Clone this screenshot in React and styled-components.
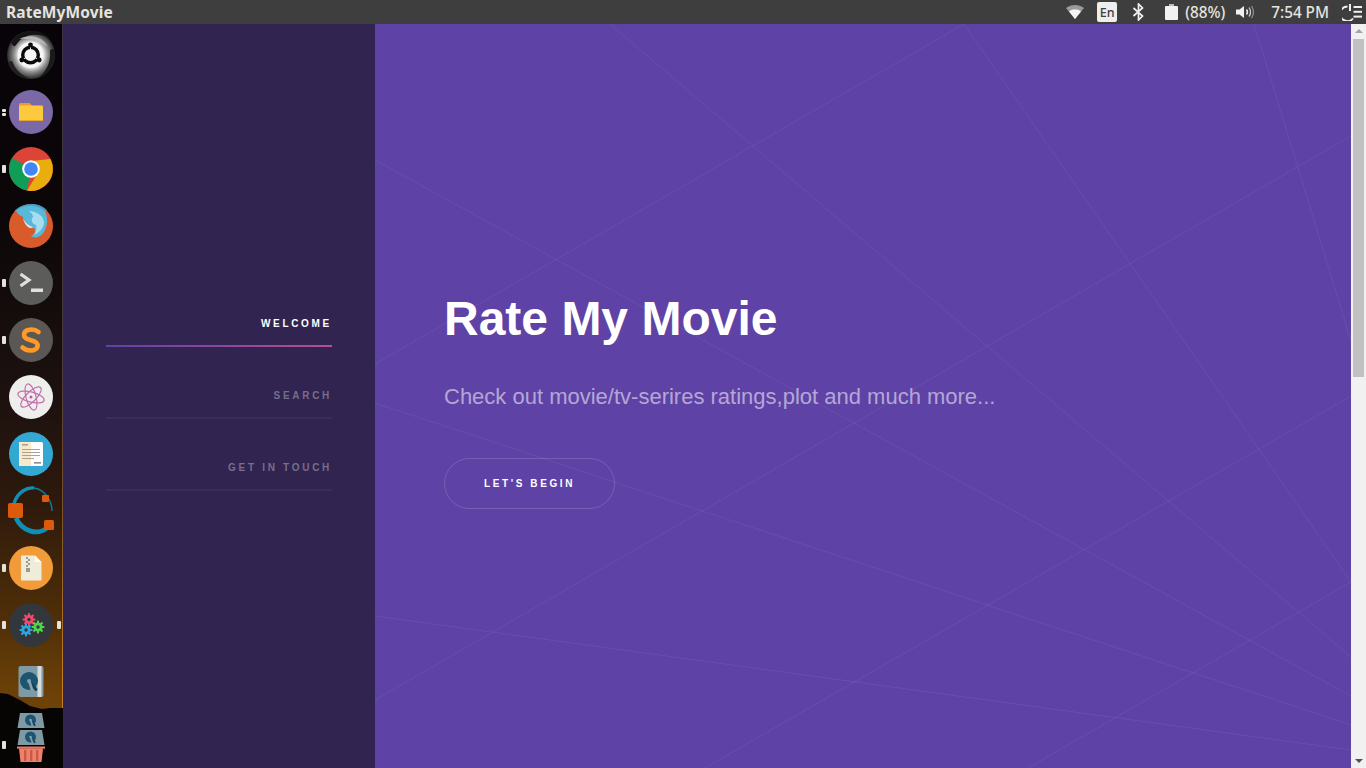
import React from "react";
import styled, { createGlobalStyle } from "styled-components";

const Global = createGlobalStyle`
  html, body { margin: 0; padding: 0; height: 100%; overflow: hidden; }
  body { font-family: "Liberation Sans", Arial, sans-serif; background: #312450; }
  #root { height: 100%; }
`;

const Screen = styled.div`
  display: flex;
  flex-direction: column;
  width: 1366px;
  height: 768px;
  overflow: hidden;
`;
const TopBar = styled.header`
  display: flex;
  align-items: center;
  flex: 0 0 24px;
  height: 24px;
  background: #3e3e3e;
  color: #e6e4de;
  font-family: "Noto Sans", sans-serif;
`;
const AppTitle = styled.div`
  margin-left: 6px;
  font-size: 15.5px;
  font-weight: 700;
  flex: 1;
  letter-spacing: 0.1px;
`;
const Tray = styled.div`
  display: flex;
  align-items: center;
  height: 24px;
`;
const TrayText = styled.span`
  font-size: 15.3px;
  font-weight: 500;
  margin-left: ${(p) => p.$ml}px;
  white-space: nowrap;
`;
const TrayIcon = styled.svg`
  display: block;
  margin-left: ${(p) => p.$ml}px;
  margin-right: ${(p) => p.$mr || 0}px;
`;
const LangBox = styled.div`
  margin-left: 13px;
  width: 20px;
  height: 20px;
  border-radius: 2px;
  background: #eeeeec;
  color: #3f3e3b;
  font-size: 12.5px;
  font-weight: 500;
  display: flex;
  align-items: center;
  justify-content: center;
`;
const Body = styled.div`
  display: flex;
  flex: 1;
  min-height: 0;
`;
const Dock = styled.nav`
  position: relative;
  flex: 0 0 63px;
  width: 63px;
  height: 744px;
  margin-right: -1px;
  box-sizing: border-box;
  background: linear-gradient(180deg, #070308 0%, #0c0608 25%, #1c110f 50%, #2f1a0c 65%, #4f2f08 80%, #6c4107 90%, #7a4a08 100%);
  overflow: hidden;
  border-right: 1px solid;
  border-image: linear-gradient(180deg, #3c3244 0%, #4a3a3a 45%, #7a5228 65%, #c67c1e 88%, #c67c1e 91.8%, #0a0606 91.8%, #0a0606 100%) 1;
  z-index: 1;
`;
const DockHill = styled.svg`
  position: absolute;
  left: 0;
  bottom: 0;
`;
const DockList = styled.div`
  position: relative;
  display: flex;
  flex-direction: column;
  padding-top: 2px;
`;
const DockItem = styled.div`
  position: relative;
  height: 57px;
  display: flex;
  align-items: center;
  justify-content: center;
  width: 62px;
  svg { display: block; overflow: visible; margin-left: -1px; }
`;
const Pip = styled.i`
  position: absolute;
  top: ${(p) => p.$top || 25}px;
  left: ${(p) => p.$left || 2}px;
  width: 4px;
  height: ${(p) => p.$h || 8}px;
  background: #e4e2de;
  border-radius: 1px;
`;
const Sidebar = styled.aside`
  flex: 0 0 313px;
  box-sizing: border-box;
  height: 744px;
  background: #312450;
  padding: 275px 43px 0 44px;
`;
const NavItem = styled.a`
  display: block;
  height: 46px;
  margin-bottom: 24px;
  text-align: right;
  border-bottom: 2px solid ${(p) => (p.$active ? "transparent" : "#3b2e5e")};
  border-image: ${(p) => (p.$active ? "linear-gradient(to right, #5e42a6, #b74e91) 1" : "none")};
  color: ${(p) => (p.$active ? "#ffffff" : "rgba(255,255,255,0.35)")};
  font-size: 10px;
  line-height: 50px;
  font-weight: 700;
  letter-spacing: 2.7px;
  text-transform: uppercase;
`;
const Main = styled.main`
  position: relative;
  flex: 1;
  height: 744px;
  background: #5e42a6;
  box-sizing: border-box;
  padding: 262px 0 0 69px;
  color: #fff;
  overflow: hidden;
`;
const Lines = styled.svg`
  position: absolute;
  left: 0;
  top: 0;
`;
const Content = styled.div`
  position: relative;
`;
const Title = styled.h1`
  margin: 0;
  font-size: 48px;
  line-height: 66px;
  font-weight: 700;
`;
const Lead = styled.p`
  margin: 27px 0 0;
  font-size: 22px;
  line-height: 36px;
  color: rgba(255,255,255,0.55);
`;
const Button = styled.a`
  display: flex;
  align-items: center;
  justify-content: center;
  margin-top: 43px;
  width: 171px;
  height: 51px;
  box-sizing: border-box;
  border: 1px solid rgba(255,255,255,0.15);
  border-radius: 26px;
  color: #fff;
  font-size: 10px;
  font-weight: 700;
  letter-spacing: 2.6px;
  text-transform: uppercase;
`;
const Scrollbar = styled.div`
  flex: 0 0 15px;
  height: 744px;
  background: #f1f1f1;
  display: flex;
  flex-direction: column;
  align-items: center;
`;
const Arrow = styled.div`
  width: 0;
  height: 0;
  margin: ${(p) => (p.$down ? "auto 0 5px" : "5px 0 5px")};
  border-left: 4px solid transparent;
  border-right: 4px solid transparent;
  ${(p) => (p.$down ? "border-top: 4px solid #505050;" : "border-bottom: 4px solid #a3a3a3;")}
`;
const Thumb = styled.div`
  width: 11px;
  height: 338px;
  background: #c1c1c1;
  margin-top: 1px;
`;

const segs = [
  [610, 24, 1351, 657],
  [375, 364, 964, 24],
  [375, 160, 1351, 696],
  [964, 24, 1351, 582],
  [375, 700, 1351, 136],
  [375, 403, 1351, 725],
  [375, 616, 1351, 750],
  [705, 768, 1351, 396],
  [1028, 768, 1351, 582],
  [1254, 24, 1351, 341],
];

const Ic = ({ children, s = 44 }) => (
  <svg width={s} height={s} viewBox="0 0 44 44">{children}</svg>
);

const UbuntuIcon = () => (
  <Ic>
    <defs>
      <radialGradient id="ub" cx="50%" cy="50%" r="50%">
        <stop offset="0.5" stopColor="#f0f0f0" />
        <stop offset="0.72" stopColor="#8a8a8a" />
        <stop offset="1" stopColor="#2a2a2a" />
      </radialGradient>
    </defs>
    <circle cx="22" cy="22" r="24" fill="url(#ub)" />
    <path d="M2 10 C10 -4 30 -6 42 6 C30 -1 14 0 7 12 C5 15 4 12 2 10Z" fill="#141414" />
    <path d="M-1 30 C1 38 10 46 22 46 C14 43 7 38 4 30 C3 27 1 28 -1 30Z" fill="#202020" />
    <path d="M46 18 C47 30 40 41 30 45 C37 38 42 30 41 18 C42 15 45 16 46 18Z" fill="#1a1a1a" />
    <path d="M10 6 C22 0 34 4 39 14 C32 8 20 5 10 6Z" fill="#b8b8b8" />
    <circle cx="21.5" cy="22" r="13" fill="#f6f6f6" />
    <circle cx="21.5" cy="22" r="7.8" fill="none" stroke="#0a0a0a" strokeWidth="3.4" />
    <g stroke="#f6f6f6" strokeWidth="0.9">
      <path d="M21.5 18 L21.5 11" />
      <path d="M18 24 L12 27.5" />
      <path d="M25 24 L31 27.5" />
    </g>
    <circle cx="21.5" cy="12" r="2.4" fill="#0a0a0a" />
    <circle cx="12.8" cy="27" r="2.4" fill="#0a0a0a" />
    <circle cx="30.2" cy="27" r="2.4" fill="#0a0a0a" />
  </Ic>
);
const FilesIcon = () => (
  <Ic>
    <circle cx="22" cy="22" r="22" fill="#7b68a6" />
    <path d="M10 14.5 a1.5 1.5 0 0 1 1.5 -1.5 h9 l2 2 h1 v3 h-13.5z" fill="#f29a2e" />
    <rect x="10" y="15.5" width="24" height="15.5" rx="1" fill="#fdca3f" />
    <rect x="10" y="30" width="24" height="1" fill="#e2a72d" />
  </Ic>
);
const ChromeIcon = () => (
  <Ic>
    <circle cx="22" cy="22" r="22" fill="#db4437" />
    <path d="M22 22 L3 11 A22 22 0 0 0 18 43.6Z" fill="#109d58" />
    <path d="M22 14 L41.5 12 A22 22 0 0 1 18 43.6 L29 26Z" fill="#e9ae0e" />
    <path d="M3 11 L14 28 L22 22Z" fill="#109d58" />
    <circle cx="22" cy="22" r="8.8" fill="#fff" />
    <circle cx="22" cy="22" r="6.8" fill="#4285f4" />
  </Ic>
);
const FirefoxIcon = () => (
  <Ic>
    <circle cx="22" cy="22" r="22" fill="#d95b2b" />
    <path d="M5 8 C12 -2 32 -3 39 8 C36 5 30 6 28 8 C22 4 12 4 5 8Z" fill="#3f9fc6" />
    <path d="M7 7 C14 0 28 0 36 7 C39 14 39 20 35 28 C32 33 26 35 22 32 C26 30 27 27 25 24 C21 24 18 22 17 19 C15 17 15 14 13 12 C11 12 9 10 7 7Z" fill="#58b8da" />
    <path d="M20 7 C27 7 34 11 35 18 C35 24 30 29 25 31 C27 27 28 24 27 21 C24 20 22 18 23 14 C25 14 24 10 20 7Z" fill="#a5dcee" />
    <path d="M14 14 C16 19 20 22 24 23 C21 26 15 21 14 14Z" fill="#f2e5de" />
  </Ic>
);
const TerminalIcon = () => (
  <Ic>
    <circle cx="22" cy="22" r="22" fill="#5c5c5a" />
    <path d="M11.5 13 L20 19 L11.5 25" fill="none" stroke="#e0e0de" strokeWidth="3.2" />
    <rect x="22" y="27.5" width="12" height="3.5" fill="#e0e0de" />
  </Ic>
);
const SublimeIcon = () => (
  <Ic>
    <circle cx="22" cy="22" r="22" fill="#5a5754" />
    <path d="M29.5 14 C26.5 11.5 22 11 18.5 12.2 C14 14 14 19 18 20.8 L25.5 23.5 C30 25.5 29.5 30.5 25 32 C21 33 16.5 32.2 13.5 29.5" fill="none" stroke="#ff9a26" strokeWidth="4.6" strokeLinecap="round" />
  </Ic>
);
const AtomIcon = () => (
  <Ic>
    <circle cx="22" cy="22" r="22" fill="#eeeeec" />
    <g fill="none" stroke="#c470ac" strokeWidth="1.2">
      <ellipse cx="22" cy="22" rx="13.5" ry="5" transform="rotate(15 22 22)" />
      <ellipse cx="22" cy="22" rx="13.5" ry="5" transform="rotate(75 22 22)" />
      <ellipse cx="22" cy="22" rx="13.5" ry="5" transform="rotate(135 22 22)" />
    </g>
    <circle cx="22" cy="22" r="1.5" fill="#c05aa0" />
  </Ic>
);
const ReaderIcon = () => (
  <Ic>
    <circle cx="22" cy="22" r="22" fill="#33a8d2" />
    <rect x="10" y="10" width="24" height="24" rx="1.5" fill="#ffffff" />
    <rect x="10" y="10" width="12" height="24" fill="#f8e9cd" />
    <g fill="#a9a397">
      <rect x="13" y="12" width="6" height="1.6" />
      <rect x="13" y="17" width="18" height="1" />
      <rect x="13" y="20" width="18" height="1" />
      <rect x="13" y="23" width="18" height="1" />
      <rect x="13" y="26" width="12" height="1" />
      <rect x="25" y="30" width="7" height="1.6" fill="#8c8c8c" />
    </g>
  </Ic>
);
const OpenshotIcon = () => (
  <Ic>
    <path d="M5 14 C9 3 18 -2 25 -1" fill="none" stroke="#0f8fb5" strokeWidth="3.4" />
    <path d="M25 -1 C34 0 43 10 43 22" fill="none" stroke="#0a7f9f" strokeWidth="1.4" />
    <path d="M7 29 C13 42 28 47 38 39" fill="none" stroke="#0f8fb5" strokeWidth="4.8" />
    <rect x="-1" y="14" width="15" height="15" rx="2" fill="#dd5a0a" />
    <rect x="33" y="6" width="7" height="7" rx="1" fill="#dd5a0a" />
    <rect x="35" y="31" width="10" height="10" rx="1.5" fill="#dd5a0a" />
  </Ic>
);
const ArchiveIcon = () => (
  <Ic>
    <circle cx="22" cy="22" r="22" fill="#f19b3a" />
    <path d="M12 9.5 H26 L32.5 16 V34.5 H12Z" fill="#efecdb" />
    <path d="M26 9.5 L32.5 16 H26Z" fill="#ffffff" />
    <g fill="#9c9a8c">
      <rect x="17" y="11" width="2" height="2" />
      <rect x="19" y="13" width="2" height="2" />
      <rect x="17" y="15" width="2" height="2" />
      <rect x="19" y="17" width="2" height="2" />
      <rect x="17" y="19" width="2" height="2" />
      <rect x="17" y="22" width="4" height="4" />
    </g>
  </Ic>
);
const Gear = ({ cx, cy, fill }) => (
  <g>
    {[0, 45, 90, 135].map((a) => (
      <rect key={a} x={cx - 1} y={cy - 6.4} width="2" height="12.8" fill={fill} transform={`rotate(${a} ${cx} ${cy})`} />
    ))}
    <circle cx={cx} cy={cy} r="4.6" fill={fill} />
    <circle cx={cx} cy={cy} r="1.7" fill="#33363a" />
  </g>
);
const GearsIcon = () => (
  <Ic>
    <circle cx="22" cy="22" r="22" fill="#33363a" />
    <Gear cx={20} cy={16.5} fill="#ef4a6d" />
    <Gear cx={29} cy={24} fill="#50d44e" />
    <Gear cx={17} cy={27} fill="#2fa4e0" />
  </Ic>
);
const Disc = ({ cx, cy, r }) => (
  <g>
    <circle cx={cx} cy={cy} r={r} fill="#1c5570" />
    <path d={`M${cx} ${cy} L${cx + r * 0.85} ${cy + r * 1.05}`} stroke="#123f5c" strokeWidth={r * 0.32} />
    <path d={`M${cx} ${cy - r * 0.1} L${cx + r * 0.35} ${cy + r * 1.02}`} stroke="#85a0aa" strokeWidth={r * 0.32} />
    <circle cx={cx} cy={cy} r={r * 0.22} fill="#85a0aa" />
  </g>
);
const DiskIcon = () => (
  <Ic>
    <rect x="9.5" y="6" width="25" height="31" rx="2" fill="#7f9aa5" />
    <rect x="28.5" y="6" width="4" height="31" fill="#d5dcdc" />
    <Disc cx={20} cy={21} r={9} />
  </Ic>
);
const StackIcon = () => (
  <Ic>
    <path d="M11 -4 H33 L35.5 11 H8.5Z" fill="#7f9aa5" />
    <Disc cx={21.5} cy={3} r={5.5} />
    <path d="M11 13 H33 L35.5 28 H8.5Z" fill="#7f9aa5" />
    <Disc cx={21.5} cy={20} r={5.5} />
    <rect x="8" y="29.5" width="28" height="2.2" fill="#f07a60" />
    <path d="M10 31.5 H34 L32.5 45 H11.5Z" fill="#f0806a" />
    <g fill="#c85a48">
      <rect x="15" y="33" width="2.4" height="11" />
      <rect x="21" y="33" width="2.4" height="11" />
      <rect x="27" y="33" width="2.4" height="11" />
    </g>
  </Ic>
);

const dock = [
  { Icon: UbuntuIcon },
  { Icon: FilesIcon, pips: [{ top: 26, h: 3 }, { top: 30, h: 3 }] },
  { Icon: ChromeIcon, pips: [{}] },
  { Icon: FirefoxIcon },
  { Icon: TerminalIcon, pips: [{}] },
  { Icon: SublimeIcon, pips: [{}] },
  { Icon: AtomIcon },
  { Icon: ReaderIcon },
  { Icon: OpenshotIcon },
  { Icon: ArchiveIcon, pips: [{}] },
  { Icon: GearsIcon, pips: [{}, { left: 57 }] },
  { Icon: DiskIcon },
  { Icon: StackIcon, pips: [{ top: 31 }] },
];

export default function App() {
  return (
    <Screen>
      <Global />
      <TopBar>
        <AppTitle>RateMyMovie</AppTitle>
        <Tray>
          <TrayIcon $ml={0} width="18" height="14" viewBox="0 0 18 14">
            <path d="M0 3 C5 -1 13 -1 18 3 L9 14Z" fill="#9a9a98" />
            <path d="M3 6.5 C6.5 3.5 11.5 3.5 15 6.5 L9 14Z" fill="#f4f4f2" />
          </TrayIcon>
          <LangBox>En</LangBox>
          <TrayIcon $ml={15} width="13" height="18" viewBox="0 0 13 18">
            <path d="M1.5 5 L10.5 13 L6.5 17 V1 L10.5 5 L1.5 13" fill="none" stroke="#f0f0ee" strokeWidth="1.7" />
          </TrayIcon>
          <TrayIcon $ml={20} width="13" height="16" viewBox="0 0 13 16">
            <rect x="4" y="0" width="5" height="2" fill="#bdbdbb" />
            <rect x="0" y="2" width="13" height="14" rx="1" fill="#f2f2f0" />
          </TrayIcon>
          <TrayText $ml={7}>(88%)</TrayText>
          <TrayIcon $ml={11} width="20" height="14" viewBox="0 0 20 14">
            <path d="M0 4.5 H3.5 L8 1 V13 L3.5 9.5 H0Z" fill="#f0f0ee" />
            <path d="M10.5 4.5 Q12.5 7 10.5 9.5" fill="none" stroke="#f0f0ee" strokeWidth="1.4" />
            <path d="M13 2.5 Q16 7 13 11.5" fill="none" stroke="#d0d0ce" strokeWidth="1.3" />
            <path d="M15.5 1 Q19.5 7 15.5 13" fill="none" stroke="#8c8c8a" strokeWidth="1.3" />
          </TrayIcon>
          <TrayText $ml={15}>7:54 PM</TrayText>
          <TrayIcon $ml={13} $mr={4} width="20" height="18" viewBox="0 0 20 18">
            <path d="M5.5 3.5 A7.3 7.3 0 1 0 11 15.5" fill="none" stroke="#f0f0ee" strokeWidth="1.9" />
            <rect x="7" y="1" width="2" height="7" fill="#f0f0ee" />
            <rect x="11.5" y="3" width="8.5" height="2" fill="#f0f0ee" />
            <rect x="11.5" y="7.8" width="8.5" height="2" fill="#f0f0ee" />
            <rect x="11.5" y="12.6" width="8.5" height="2" fill="#f0f0ee" />
          </TrayIcon>
        </Tray>
      </TopBar>
      <Body>
        <Dock>
          <DockHill width="62" height="80" viewBox="0 0 62 80">
            <path d="M0 5 L8 6 L20 12 L30 18 L42 21 L50 20 L62 20 V80 H0Z" fill="#070404" />
          </DockHill>
          <DockList>
            {dock.map(({ Icon, pips = [] }, i) => (
              <DockItem key={i}>
                <Icon />
                {pips.map((p, j) => (
                  <Pip key={j} $top={p.top} $left={p.left} $h={p.h} />
                ))}
              </DockItem>
            ))}
          </DockList>
        </Dock>
        <Sidebar>
          <NavItem $active>Welcome</NavItem>
          <NavItem>Search</NavItem>
          <NavItem>Get in touch</NavItem>
        </Sidebar>
        <Main>
          <Lines width="976" height="744" viewBox="375 24 976 744">
            {segs.map(([a, b, c, d], i) => (
              <line key={i} x1={a} y1={b} x2={c} y2={d} stroke="#ffffff" strokeOpacity="0.065" strokeWidth="1" />
            ))}
          </Lines>
          <Content>
            <Title>Rate My Movie</Title>
            <Lead>Check out movie/tv-serires ratings,plot and much more...</Lead>
            <Button>Let's begin</Button>
          </Content>
        </Main>
        <Scrollbar>
          <Arrow />
          <Thumb />
          <Arrow $down />
        </Scrollbar>
      </Body>
    </Screen>
  );
}
